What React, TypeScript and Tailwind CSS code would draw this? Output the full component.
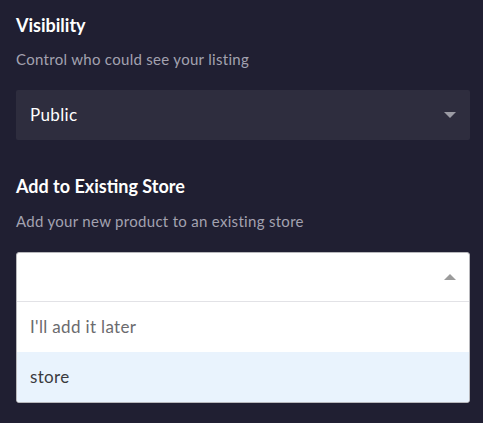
export default function App() {
  return (
    <div
      className="min-h-[423px] w-[483px] bg-[#201f32] px-4 pt-[13px]"
      style={{ fontFamily: "Lato, 'Noto Sans', sans-serif" }}
    >
      {/* Visibility */}
      <h2 className="text-[18px] leading-6 font-bold text-white">Visibility</h2>
      <p className="mt-[12px] text-[15px] leading-5 tracking-[0.02em] text-[#a3a2b0]">
        Control who could see your listing
      </p>
      <button className="mt-[21px] flex h-[50px] w-[454px] items-center justify-between rounded-[2px] bg-[#2e2d3e] pl-[14px] pr-[14px]">
        <span className="text-[17px] tracking-[0.02em] text-white">Public</span>
        <span className="h-0 w-0 border-x-[6px] border-t-[6px] border-x-transparent border-t-[#9b9ba4]" />
      </button>

      {/* Add to Existing Store */}
      <h2 className="mt-[34px] text-[18px] leading-6 font-bold text-white">
        Add to Existing Store
      </h2>
      <p className="mt-[13px] text-[15px] leading-5 tracking-[0.02em] text-[#a3a2b0]">
        Add your new product to an existing store
      </p>
      <div className="mt-[21px] w-[454px] overflow-hidden rounded-[3px] border border-[#b8b8bc] bg-white">
        <div className="flex h-[48px] items-center justify-end pr-[13px]">
          <span className="h-0 w-0 border-x-[6px] border-b-[6px] border-x-transparent border-b-[#9b9b9b]" />
        </div>
        <div className="border-t border-[#e2e2e6]">
          <div className="flex h-[50px] items-center px-[13px] text-[17px] tracking-[0.02em] text-[#6b6b6e]">
            I'll add it later
          </div>
          <div className="flex h-[50px] items-center bg-[#e9f3fd] px-[13px] text-[17px] tracking-[0.02em] text-[#3a3a3e]">
            store
          </div>
        </div>
      </div>
    </div>
  );
}
